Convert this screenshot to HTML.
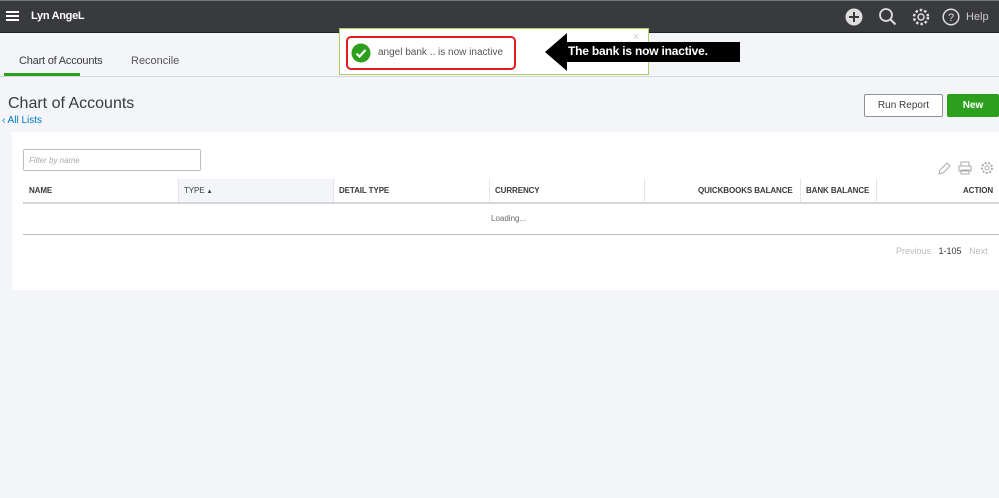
<!DOCTYPE html>
<html><head><style>
*{margin:0;padding:0;box-sizing:border-box}
body{width:999px;height:498px;background:#f4f5f8;font-family:"Liberation Sans",sans-serif;position:relative;overflow:hidden;color:#393a3d}
.a{position:absolute}
.top{left:0;top:0;width:999px;height:33px;background:#393a3d;border-top:1px solid #777;border-bottom:1px solid #222}
.th{font-size:8px;font-weight:bold;top:186px;color:#393a3d;letter-spacing:-.1px}
.vd{top:179px;width:1px;height:23px;background:#e3e5e8}
</style></head><body>
<div class="a top"></div>
<div class="a" style="left:6px;top:11px;width:13px;height:2px;background:#fff;box-shadow:0 4px 0 #fff,0 8px 0 #fff"></div>
<div class="a" style="left:31px;top:10px;color:#fff;font-size:11px;font-weight:bold;letter-spacing:-.3px">Lyn AngeL</div>
<svg class="a" style="left:845px;top:8px" width="18" height="18"><circle cx="9" cy="9" r="8.5" fill="#ddd"/><path d="M9 4v10M4 9h10" stroke="#393a3d" stroke-width="2"/></svg>
<svg class="a" style="left:878px;top:7px" width="20" height="20"><circle cx="8" cy="8" r="6" fill="none" stroke="#ddd" stroke-width="1.8"/><path d="M12.5 12.5l5 5" stroke="#ddd" stroke-width="2"/></svg>
<svg class="a" style="left:911px;top:7px" width="20" height="20"><circle cx="10" cy="10" r="3" fill="none" stroke="#ddd" stroke-width="1.5"/><circle cx="10" cy="10" r="7" fill="none" stroke="#ddd" stroke-width="2.5" stroke-dasharray="2.5 2"/></svg>
<svg class="a" style="left:942px;top:8px" width="18" height="18"><circle cx="9" cy="9" r="7.8" fill="none" stroke="#ddd" stroke-width="1.5"/><text x="9" y="13" font-size="11" fill="#ddd" text-anchor="middle" font-family="Liberation Sans">?</text></svg>
<div class="a" style="left:966px;top:11px;color:#ccc;font-size:11px">Help</div>

<div class="a" style="left:19px;top:55px;font-size:11px;color:#393a3d;letter-spacing:-.2px">Chart of Accounts</div>
<div class="a" style="left:131px;top:55px;font-size:11px;color:#555">Reconcile</div>
<div class="a" style="left:4px;top:73px;width:76px;height:3px;background:#2ca01c"></div>
<div class="a" style="left:0;top:76px;width:999px;height:1px;background:#d4d7dc"></div>

<div class="a" style="left:339px;top:28px;width:310px;height:47px;background:#fff;border:1px solid #a8d06a"></div>
<div class="a" style="left:346px;top:36px;width:170px;height:34px;border:2px solid #e31b23;border-radius:5px"></div>
<svg class="a" style="left:351px;top:43px" width="20" height="20"><circle cx="10" cy="10" r="9.5" fill="#2ca01c"/><path d="M5.5 10.5l3 3 6-6.5" fill="none" stroke="#fff" stroke-width="2.2"/></svg>
<div class="a" style="left:378px;top:47px;font-size:10px;color:#555">angel bank .. is now inactive</div>
<div class="a" style="left:633px;top:31px;font-size:11px;color:#ccc">×</div>
<svg class="a" style="left:545px;top:33px" width="195" height="38"><polygon points="0,19 22,0 22,9 195,9 195,29 22,29 22,38" fill="#000"/></svg>
<div class="a" style="left:568px;top:44px;color:#fff;font-size:12px;font-weight:bold;letter-spacing:-.2px">The bank is now inactive.</div>

<div class="a" style="left:8px;top:95px;font-size:16px;color:#393a3d">Chart of Accounts</div>
<div class="a" style="left:2px;top:115px;font-size:10px;color:#0077c5">‹ All Lists</div>
<div class="a" style="left:864px;top:94px;width:79px;height:23px;border:1px solid #8d9096;border-radius:2px;background:#fff;font-size:10px;text-align:center;line-height:21px">Run Report</div>
<div class="a" style="left:947px;top:94px;width:52px;height:23px;background:#2ca01c;border-radius:2px;color:#fff;font-size:10px;font-weight:bold;text-align:center;line-height:23px">New</div>

<div class="a" style="left:12px;top:132px;width:987px;height:158px;background:#fff"></div>
<div class="a" style="left:23px;top:149px;width:178px;height:22px;border:1px solid #babec5;border-radius:2px;font-size:8px;font-style:italic;color:#aaa;padding:6px 5px">Filter by name</div>
<svg class="a" style="left:936px;top:160px" width="60" height="16"><path d="M3 14l1-4 7-7 3 3-7 7z" fill="none" stroke="#aaa"/><rect x="25" y="2" width="8" height="4" fill="none" stroke="#aaa"/><rect x="23" y="6" width="12" height="5" fill="none" stroke="#aaa"/><rect x="25" y="10" width="8" height="4" fill="none" stroke="#aaa"/><circle cx="51" cy="8" r="2" fill="none" stroke="#aaa"/><circle cx="51" cy="8" r="5" fill="none" stroke="#aaa" stroke-width="2" stroke-dasharray="2 1.5"/></svg>
<div class="a" style="left:178px;top:179px;width:155px;height:23px;background:#f4f5f8"></div>
<div class="a vd" style="left:178px"></div><div class="a vd" style="left:333px"></div><div class="a vd" style="left:489px"></div><div class="a vd" style="left:644px"></div><div class="a vd" style="left:800px"></div><div class="a vd" style="left:876px"></div>
<div class="a th" style="left:29px">NAME</div>
<div class="a th" style="left:184px;font-weight:normal">TYPE <span style="font-size:6px">▲</span></div>
<div class="a th" style="left:339px">DETAIL TYPE</div>
<div class="a th" style="left:495px">CURRENCY</div>
<div class="a th" style="left:698px">QUICKBOOKS BALANCE</div>
<div class="a th" style="left:806px">BANK BALANCE</div>
<div class="a th" style="left:963px">ACTION</div>
<div class="a" style="left:23px;top:202px;width:976px;height:2px;background:#d4d7dc"></div>
<div class="a" style="left:491px;top:214px;font-size:8px;color:#6b6c72">Loading...</div>
<div class="a" style="left:23px;top:234px;width:976px;height:1px;background:#babec5"></div>
<div class="a" style="left:896px;top:246px;font-size:9px;color:#bbb">Previous <span style="color:#393a3d;margin:0 5px">1-105</span> Next</div>
</body></html>
